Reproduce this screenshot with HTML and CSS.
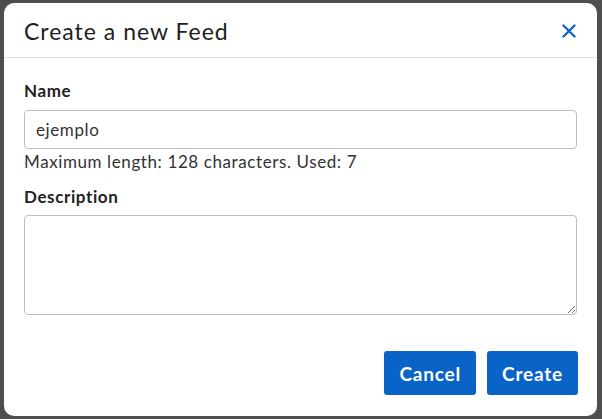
FILE: index.html
```html
<!DOCTYPE html>
<html>
<head>
<meta charset="utf-8">
<link rel="stylesheet" href="styles.css">
</head>
<body>
<div class="backdrop">
  <div class="modal">
    <div class="modal-header">
      <h1 class="modal-title">Create a new Feed</h1>
      <button class="close-btn" aria-label="Close">
        <svg width="14" height="14" viewBox="0 0 14 14"><path d="M1.5 1.5 L12.5 12.5 M12.5 1.5 L1.5 12.5" stroke="#1565c0" stroke-width="2.4" stroke-linecap="round"/></svg>
      </button>
    </div>
    <div class="modal-body">
      <label class="field-label">Name</label>
      <input class="text-input" type="text" value="ejemplo">
      <div class="help-text">Maximum length: 128 characters. Used: 7</div>
      <label class="field-label desc-label">Description</label>
      <textarea class="text-area"></textarea>
    </div>
    <div class="modal-footer">
      <button class="btn">Cancel</button>
      <button class="btn">Create</button>
    </div>
  </div>
</div>
</body>
</html>
```
FILE: styles.css
```css
html, body {
  margin: 0;
  padding: 0;
  height: 100%;
  background: #4e4e4e;
  font-family: Lato, "Open Sans", sans-serif;
  color: #222;
}
.backdrop {
  box-sizing: border-box;
  height: 419px;
  padding: 3px 5px 3px 4px;
}
.modal {
  background: #fff;
  border-radius: 10px;
  height: 100%;
  display: flex;
  flex-direction: column;
}
.modal-header {
  height: 54px;
  border-bottom: 1px solid #e3e3e3;
  display: flex;
  align-items: center;
  justify-content: space-between;
  padding: 0 20px;
}
.modal-title {
  margin: 0;
  font-size: 23px;
  font-weight: 400;
  letter-spacing: 1px;
  color: #1e1e1e;
  padding-top: 2px;
}
.close-btn {
  background: none;
  border: 0;
  padding: 0;
  margin-right: 1px;
  margin-top: 2px;
  display: flex;
}
.modal-body {
  padding: 22px 20px 0;
  display: flex;
  flex-direction: column;
}
.field-label {
  font-size: 17px;
  font-weight: 700;
  line-height: 22px;
  letter-spacing: 0.6px;
  color: #222;
}
.text-input {
  margin-top: 8px;
  box-sizing: border-box;
  height: 39px;
  border: 1px solid #bdbdbd;
  border-radius: 4px;
  padding: 0 11px;
  font-family: inherit;
  font-size: 17px;
  letter-spacing: 0.6px;
  color: #333;
}
.help-text {
  font-size: 17px;
  line-height: 24px;
  letter-spacing: 0.6px;
  color: #333;
  margin-top: 1px;
}
.desc-label {
  margin-top: 12px;
}
.text-area {
  margin-top: 7px;
  box-sizing: border-box;
  height: 100px;
  border: 1px solid #bdbdbd;
  border-radius: 4px;
  font-family: inherit;
}
.modal-footer {
  margin-top: auto;
  padding: 0 19px 21px;
  display: flex;
  justify-content: flex-end;
  gap: 11px;
}
.btn {
  background: #0a63c6;
  color: #fff;
  border: 0;
  border-radius: 3px;
  height: 44px;
  padding: 0 15px;
  font-family: inherit;
  font-size: 19px;
  letter-spacing: 0.8px;
  font-weight: 700;
}
```
